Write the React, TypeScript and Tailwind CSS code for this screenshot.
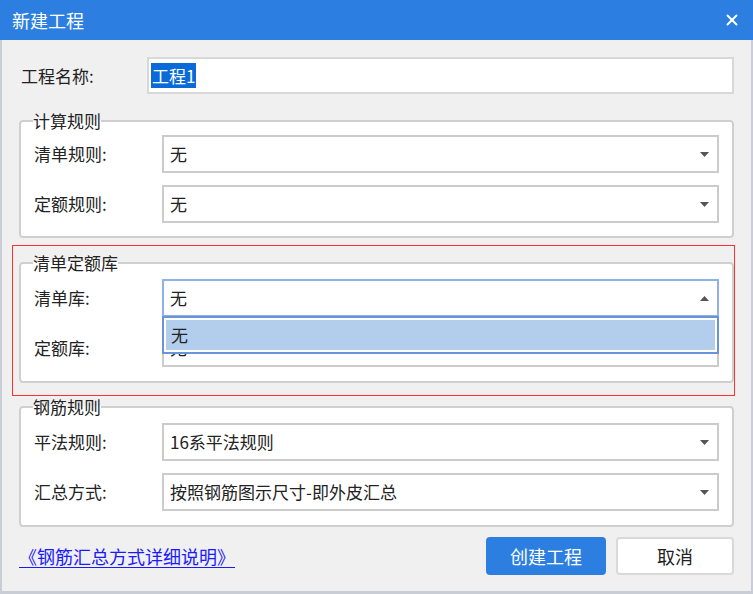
import { X } from "lucide-react";

const font = { fontFamily: '"Microsoft YaHei", "Noto Sans CJK SC", "Noto Sans", sans-serif' };

const Arrow = ({ up = false }: { up?: boolean }) => (
  <svg width="9" height="5" viewBox="0 0 9 5" className="shrink-0">
    <path d={up ? "M0 5 L4.5 0 L9 5 Z" : "M0 0 L9 0 L4.5 5 Z"} fill="#555" />
  </svg>
);

const Select = ({ value, active = false }: { value: string; active?: boolean }) => (
  <div
    className={`flex h-[38px] flex-1 items-center justify-between bg-white pl-[6px] pr-[8px] text-[17px] text-[#222] ${
      active ? "border-2 border-[#8fb0e8]" : "border-2 border-[#cbcbcb]"
    }`}
  >
    <span>{value}</span>
    <Arrow up={active} />
  </div>
);

const Row = ({ label, children }: { label: string; children: React.ReactNode }) => (
  <div className="flex items-center">
    <div className="w-[128px] shrink-0 text-[17px] text-[#222]">{label}</div>
    {children}
  </div>
);

const Group = ({ title, tight = false, children }: { title: string; tight?: boolean; children: React.ReactNode }) => (
  <fieldset
    className={`rounded-[4px] border-2 border-[#cfcfcf] bg-white pl-[13px] pr-[13px] ${
      tight ? "pb-[13px] pt-[5px]" : "pb-[14px] pt-[7px]"
    }`}
  >
    <legend className="ml-[-1px] px-0 text-[17px] leading-[18px] text-[#222]">{title}</legend>
    <div className="flex flex-col gap-[12px]">{children}</div>
  </fieldset>
);

export default function App() {
  return (
    <div style={font} className="flex h-[594px] w-[753px] flex-col overflow-hidden bg-[#f0f0f0]">
      {/* Title bar */}
      <div className="flex h-[40px] shrink-0 items-center justify-between bg-[#2c7fe0] pl-[12px] pr-[12px] text-white">
        <span className="text-[18px]">新建工程</span>
        <X size={18} strokeWidth={2.6} />
      </div>

      <div className="flex flex-1 flex-col border-b-[3px] border-l-2 border-r-2 border-[#c9ced6] px-[17px]">
        {/* Name */}
        <div className="mt-[17px] flex items-center">
          <div className="w-[128px] shrink-0 pl-[2px] text-[17px] text-[#222]">工程名称:</div>
          <div className="flex h-[37px] flex-1 items-center border-2 border-[#d8d8d8] bg-white pl-[2px]">
            <span className="bg-[#0a6bd8] px-[1px] text-[17px] leading-[25px] text-white">工程1</span>
          </div>
        </div>

        <div className="mt-[18px]">
          <Group title="计算规则" tight>
            <Row label="清单规则:">
              <Select value="无" />
            </Row>
            <Row label="定额规则:">
              <Select value="无" />
            </Row>
          </Group>
        </div>

        {/* Highlighted group */}
        <div className="ml-[-7px] mr-[-1px] mt-[7px] border border-[#ff3030] pb-[12px] pl-[6px] pt-[8px]">
          <Group title="清单定额库">
            <div className="relative flex flex-col gap-[12px]">
              <Row label="清单库:">
                <Select value="无" active />
              </Row>
              <Row label="定额库:">
                <Select value="无" />
              </Row>
              <div className="absolute left-[128px] right-0 top-[37px] border-2 border-[#6b93dc] bg-white p-[2px]">
                <div className="flex h-[30px] items-center bg-[#b3cdec] pl-[5px] text-[17px] text-[#222]">无</div>
              </div>
            </div>
          </Group>
        </div>

        <div className="mt-[2px]">
          <Group title="钢筋规则">
            <Row label="平法规则:">
              <Select value="16系平法规则" />
            </Row>
            <Row label="汇总方式:">
              <Select value="按照钢筋图示尺寸-即外皮汇总" />
            </Row>
          </Group>
        </div>

        {/* Footer */}
        <div className="mt-[10px] flex items-center justify-between">
          <a className="text-[18px] text-[#1a1aff] underline underline-offset-[3px]">《钢筋汇总方式详细说明》</a>
          <div className="flex gap-[10px]">
            <button className="h-[38px] w-[120px] rounded-[4px] bg-[#2c7fe0] text-[18px] text-white">创建工程</button>
            <button className="h-[38px] w-[118px] rounded-[4px] border-2 border-[#d9d9d9] bg-white text-[18px] text-[#222]">
              取消
            </button>
          </div>
        </div>
      </div>
    </div>
  );
}
